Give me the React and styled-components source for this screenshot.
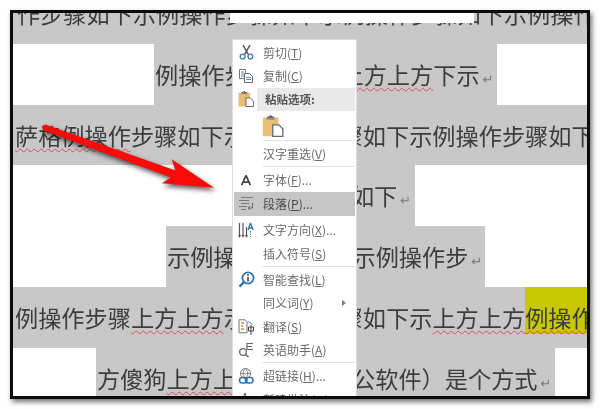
import React from "react";
import styled, { createGlobalStyle } from "styled-components";

const Global = createGlobalStyle`
  html, body { margin: 0; padding: 0; background: #fff; }
  body { width: 600px; height: 409px; overflow: hidden; font-family: "Noto Sans CJK SC", "Liberation Sans", sans-serif; }
`;

const Frame = styled.div`
  box-sizing: border-box;
  width: 580px;
  height: 389px;
  margin: 10px 0 0 10px;
  border: 3px solid #0c0c0c;
  box-shadow: 2px 3px 5px rgba(0, 0, 0, 0.55);
  filter: blur(0.4px);
`;

const Sheet = styled.div`
  position: relative;
  height: 100%;
  overflow: hidden;
  background: #c8c8c8;
`;

const Row = styled.div`
  display: flex;
  height: ${(p) => p.$h}px;
  background: #c8c8c8;
`;

const Blank = styled.div`
  flex: none;
  width: ${(p) => p.$w}px;
  background: #fff;
`;

const Line = styled.div`
  flex: 1;
  min-width: 0;
  height: 61px;
  margin-top: ${(p) => p.$lift || 0}px;
  padding-left: ${(p) => p.$pad || 0}px;
  overflow: hidden;
  white-space: nowrap;
  font-size: 23.2px;
  line-height: 61px;
  color: #3c3c3c;
`;

const Wavy = styled.span`
  text-decoration: underline wavy #e2484c 1px;
  text-underline-offset: 3px;
`;

const Mark = styled.span`
  margin-left: 3px;
  font-family: "DejaVu Sans", sans-serif;
  font-size: 13px;
  color: #777;
`;

const Hilite = styled.span`
  background: #c8c800;
  padding: 13px 0 0;
`;

const Strip = styled.div`
  position: absolute;
  left: 217px;
  top: 0;
  width: 244px;
  height: 10px;
  background: #fff;
`;

const Arrow = styled.svg`
  position: absolute;
  left: 0;
  top: 0;
  overflow: visible;
  filter: drop-shadow(2px 3px 2.5px rgba(0, 0, 0, 0.65));
`;

const Menu = styled.div`
  position: absolute;
  left: 219px;
  top: 26px;
  box-sizing: border-box;
  width: 125px;
  height: 380px;
  padding: 1px;
  background: #fff;
  border: 1px solid #dcdcdc;
  font-size: 12px;
  color: #6a6a6a;
`;

const Item = styled.div`
  display: flex;
  align-items: center;
  height: 23.5px;
  background: ${(p) => (p.$active ? "#c6c6c6" : "transparent")};
  color: ${(p) => (p.$active ? "#484848" : "inherit")};
  margin-bottom: ${(p) => (p.$active ? 3 : 0)}px;
  line-height: 1;
`;

const Slot = styled.span`
  flex: none;
  display: flex;
  align-items: center;
  justify-content: center;
  width: 24px;
  height: 100%;
  margin-right: 5px;
`;

const Label = styled.span`
  white-space: nowrap;
  u { text-underline-offset: 1px; }
`;

const Caret = styled.span`
  width: 0;
  height: 0;
  margin-left: auto;
  margin-right: 9px;
  border-left: 4px solid #777;
  border-top: 3.5px solid transparent;
  border-bottom: 3.5px solid transparent;
`;

const Header = styled.div`
  height: 23px;
  margin-left: 23px;
  padding-left: 8px;
  background: #e9e9e9;
  font-weight: 700;
  font-size: 11.5px;
  line-height: 23px;
  color: #555;
`;

const HeaderWrap = styled.div`
  position: relative;
`;

const HeaderIcon = styled.span`
  position: absolute;
  left: 4px;
  top: 2px;
  display: flex;
`;

const PasteRow = styled.div`
  display: flex;
  align-items: center;
  height: 29px;
  padding-left: 28px;
`;

const Rule = styled.div`
  height: 1px;
  margin: 0 0 1.5px 29px;
  background: #e0e0e0;
`;

const Scissors = () => (
  <svg width="15" height="15" viewBox="0 0 15 15" fill="none">
    <path d="M4 0l5.2 9.2M11 0L5.8 9.2" stroke="#555" strokeWidth="1.5" />
    <circle cx="3.6" cy="11.5" r="2.4" stroke="#3f7fb8" strokeWidth="1.4" />
    <circle cx="11.4" cy="11.5" r="2.4" stroke="#3f7fb8" strokeWidth="1.4" />
  </svg>
);

const Copy = () => (
  <svg width="16" height="16" viewBox="0 0 16 16" fill="none">
    <path d="M1.5 1.5h6v9h-6z" fill="#fff" stroke="#777" />
    <path d="M3 4h3M3 6h3M3 8h3" stroke="#5b8fc0" />
    <path d="M6.5 5.5h5l3 3v6h-8z" fill="#fff" stroke="#666" />
    <path d="M8 9.5h5M8 11.5h5" stroke="#5b8fc0" />
  </svg>
);

const Paste = ({ size }) => (
  <svg width={size} height={size} viewBox="0 0 16 16">
    <rect x="0.5" y="2.5" width="11" height="13" rx="0.8" fill="#e9bd74" />
    <path d="M3.5 3V1.8h1.5C5.2.6 6.8.6 7 1.8h1.5V3z" fill="#666" />
    <rect x="3" y="3" width="6" height="1" fill="#8a8a8a" />
    <path d="M7.5 7.5h4.2l2.8 2.8v5.2h-7z" fill="#fff" stroke="#666" strokeWidth="0.9" />
  </svg>
);

const FontA = () => (
  <svg width="12" height="12" viewBox="0 0 14 14">
    <path d="M7 1.5L2 13M7 1.5L12 13M3.8 9.5h6.4" stroke="#444" strokeWidth="2" fill="none" />
  </svg>
);

const Para = () => (
  <svg width="16" height="15" viewBox="0 0 16 15" fill="none" stroke="#777">
    <path d="M3 1.5h12M1 4.5h10M3 7.5h8M1 10.5h8M3 13.5h5" />
    <path d="M14.5 7v5h-4M12 10l-2 2 2 2" stroke="#666" />
  </svg>
);

const Direction = () => (
  <svg width="16" height="17" viewBox="0 0 16 17" fill="none">
    <path d="M1.5 1v13M5 1v13M8.5 5v9" stroke="#555" strokeWidth="1.2" />
    <path d="M0 13l1.5 3L3 13M3.5 13L5 16l1.5-3M7 13l1.5 3 1.5-3" fill="#555" />
    <path d="M12.5 1L10 8M12.5 1L15 8M10.8 6h3.4" stroke="#2f78bd" strokeWidth="1.4" />
    <path d="M12.5 9v6" stroke="#777" strokeDasharray="1.5 1" />
  </svg>
);

const Search = () => (
  <svg width="17" height="17" viewBox="0 0 17 17" fill="none">
    <circle cx="10" cy="7" r="5.6" stroke="#2d76b6" strokeWidth="1.8" fill="#fff" />
    <path d="M6 11.2l-4.6 4.4" stroke="#2d76b6" strokeWidth="2.4" />
    <path d="M10 6v4.5" stroke="#333" strokeWidth="1.5" />
    <circle cx="10" cy="4" r="0.9" fill="#333" />
  </svg>
);

const Translate = () => (
  <svg width="16" height="16" viewBox="0 0 16 16" fill="none">
    <path d="M1 .8h6l2 2v11H1z" fill="#fff" stroke="#777" />
    <path d="M3 4h3M3 7h2M3 10h3" stroke="#dd8a3c" strokeWidth="1.3" />
    <path d="M10.5 8h5v4h-5zM13 6v10" stroke="#444" />
    <path d="M10 2.5l3 1.5 1.5 2" stroke="#5b8fc0" />
  </svg>
);

const Helper = () => (
  <svg width="17" height="16" viewBox="0 0 17 16" fill="none" stroke="#666">
    <circle cx="5" cy="10" r="3.4" strokeWidth="1.3" />
    <path d="M7.5 12.5L10.5 15" strokeWidth="1.6" />
    <path d="M15 1.5H9v6M9 4.5h5M9 7.5h6" strokeWidth="1.2" />
  </svg>
);

const Link = () => (
  <svg width="17" height="17" viewBox="0 0 17 17" fill="none">
    <circle cx="7.5" cy="5.5" r="5" stroke="#777" />
    <path d="M2.5 5.5h10M7.5.5c-3 3-3 7 0 10M7.5.5c3 3 3 7 0 10" stroke="#777" strokeWidth="0.8" />
    <rect x="1.5" y="9.5" width="7.5" height="5.5" rx="2.7" stroke="#2d76b6" strokeWidth="1.6" fill="none" />
    <rect x="7.5" y="9.5" width="7.5" height="5.5" rx="2.7" stroke="#2d76b6" strokeWidth="1.6" fill="none" />
  </svg>
);

const Note = () => (
  <svg width="15" height="15" viewBox="0 0 15 15">
    <path d="M6 1v10M1 6h10" stroke="#3f9a5c" strokeWidth="2.4" />
  </svg>
);

const Entry = ({ icon, text, keyName, tail, active, sub }) => (
  <Item $active={active}>
    <Slot>{icon}</Slot>
    <Label>
      {text}(<u>{keyName}</u>){tail}
    </Label>
    {sub && <Caret />}
  </Item>
);

export default function App() {
  return (
    <>
      <Global />
      <Frame>
        <Sheet>
          <Row $h={31}>
            <Line $lift={-30} $pad={4}>作步骤如下示例操作步骤如下示例操作步骤如下示例操作步骤如下示例操作</Line>
          </Row>
          <Row $h={61}>
            <Blank $w={141} />
            <Line $pad={1}>
              例操作步骤如下示<Wavy>上方上方</Wavy>下示<Mark>↵</Mark>
            </Line>
            <Blank $w={90} />
          </Row>
          <Row $h={60}>
            <Line $pad={2}>
              <Wavy>萨格例操作</Wavy>步骤如下示例操作步骤如下示例操作步骤如下
            </Line>
          </Row>
          <Row $h={61}>
            <Blank $w={219} />
            <Line $pad={3}>
              例操作步骤如下<Mark>↵</Mark>
            </Line>
            <Blank $w={172} />
          </Row>
          <Row $h={61}>
            <Blank $w={153} />
            <Line $pad={1}>
              示例操作步骤如下示例操作步<Mark>↵</Mark>
            </Line>
            <Blank $w={102} />
          </Row>
          <Row $h={61}>
            <Line $pad={2}>
              例操作步骤<Wavy>上方上方</Wavy>示例操作步骤如下示
              <Wavy>
                上方上方<Hilite>例操作步</Hilite>
              </Wavy>
            </Line>
          </Row>
          <Row $h={48}>
            <Blank $w={83} />
            <Line $pad={1}>
              方傻狗<Wavy>上方上方上方</Wavy>（办公软件）是个方式<Mark>↵</Mark>
            </Line>
            <Blank $w={32} />
          </Row>

          <Strip />

          <Arrow width="574" height="383" viewBox="13 13 574 383">
            <polygon points="41.7,126.5 45.5,124.5 175.5,170.5 171.7,159.3 214,187.7 161.7,183.3 171,177.5 43.5,130.5" fill="#fb0a0a" />
          </Arrow>

          <Menu>
            <Entry icon={<Scissors />} text="剪切" keyName="T" />
            <Entry icon={<Copy />} text="复制" keyName="C" />
            <HeaderWrap>
              <HeaderIcon><Paste size={17} /></HeaderIcon>
              <Header>粘贴选项:</Header>
            </HeaderWrap>
            <PasteRow><Paste size={23} /></PasteRow>
            <Rule />
            <Entry text="汉字重选" keyName="V" />
            <Rule />
            <Entry icon={<FontA />} text="字体" keyName="F" tail="..." />
            <Entry icon={<Para />} text="段落" keyName="P" tail="..." active />
            <Entry icon={<Direction />} text="文字方向" keyName="X" tail="..." />
            <Entry text="插入符号" keyName="S" />
            <Rule />
            <Entry icon={<Search />} text="智能查找" keyName="L" />
            <Entry text="同义词" keyName="Y" sub />
            <Entry icon={<Translate />} text="翻译" keyName="S" />
            <Entry icon={<Helper />} text="英语助手" keyName="A" />
            <Rule />
            <Entry icon={<Link />} text="超链接" keyName="H" tail="..." />
            <Entry icon={<Note />} text="新建批注" keyName="M" />
          </Menu>
        </Sheet>
      </Frame>
    </>
  );
}
